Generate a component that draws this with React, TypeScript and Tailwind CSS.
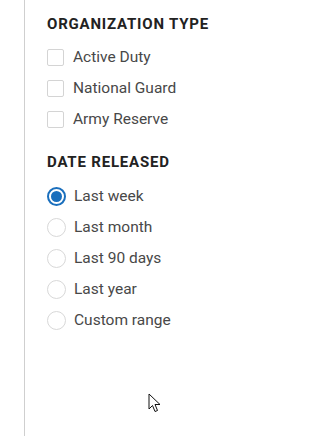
const orgTypes = ["Active Duty", "National Guard", "Army Reserve"]
const dateOptions = ["Last week", "Last month", "Last 90 days", "Last year", "Custom range"]

const Cursor = () => (
  <svg
    className="absolute left-[148px] top-[393px]"
    width="14"
    height="21"
    viewBox="0 0 14 21"
  >
    <path
      d="M1 1 L1 16 L4.5 12.5 L7 18.5 L9.5 17.5 L7 11.5 L12 11.5 Z"
      fill="#fff"
      stroke="#111"
      strokeWidth="1"
      strokeLinejoin="round"
    />
  </svg>
)

export default function App() {
  return (
    <div className="relative h-[436px] w-[325px] bg-white font-['Roboto',sans-serif]">
      <div className="ml-[24px] h-full border-l border-[#cfcfcf] pl-[22px] pt-[14px]">
        <h3 className="text-[15px] font-bold uppercase leading-[20px] tracking-[0.8px] text-[#222]">
          Organization type
        </h3>
        <div className="mt-[8px] flex flex-col">
          {orgTypes.map((label) => (
            <label key={label} className="flex h-[31px] items-center">
              <span className="h-[17px] w-[17px] rounded-[2px] border border-[#d4d4d4] bg-white" />
              <span className="ml-[9px] text-[15.5px] text-[#484848]">{label}</span>
            </label>
          ))}
        </div>

        <h3 className="mt-[17px] text-[15px] font-bold uppercase leading-[20px] tracking-[0.8px] text-[#222]">
          Date released
        </h3>
        <div className="mt-[9px] flex flex-col">
          {dateOptions.map((label, i) => (
            <label key={label} className="flex h-[31px] items-center">
              {i === 0 ? (
                <span className="flex h-[19px] w-[19px] items-center justify-center rounded-full border-2 border-[#1a6fbd] bg-white">
                  <span className="h-[11px] w-[11px] rounded-full bg-[#1a6fbd]" />
                </span>
              ) : (
                <span className="h-[19px] w-[19px] rounded-full border border-[#d8d8d8] bg-white" />
              )}
              <span className="ml-[8px] text-[15.5px] text-[#484848]">{label}</span>
            </label>
          ))}
        </div>
      </div>
      <Cursor />
    </div>
  )
}
